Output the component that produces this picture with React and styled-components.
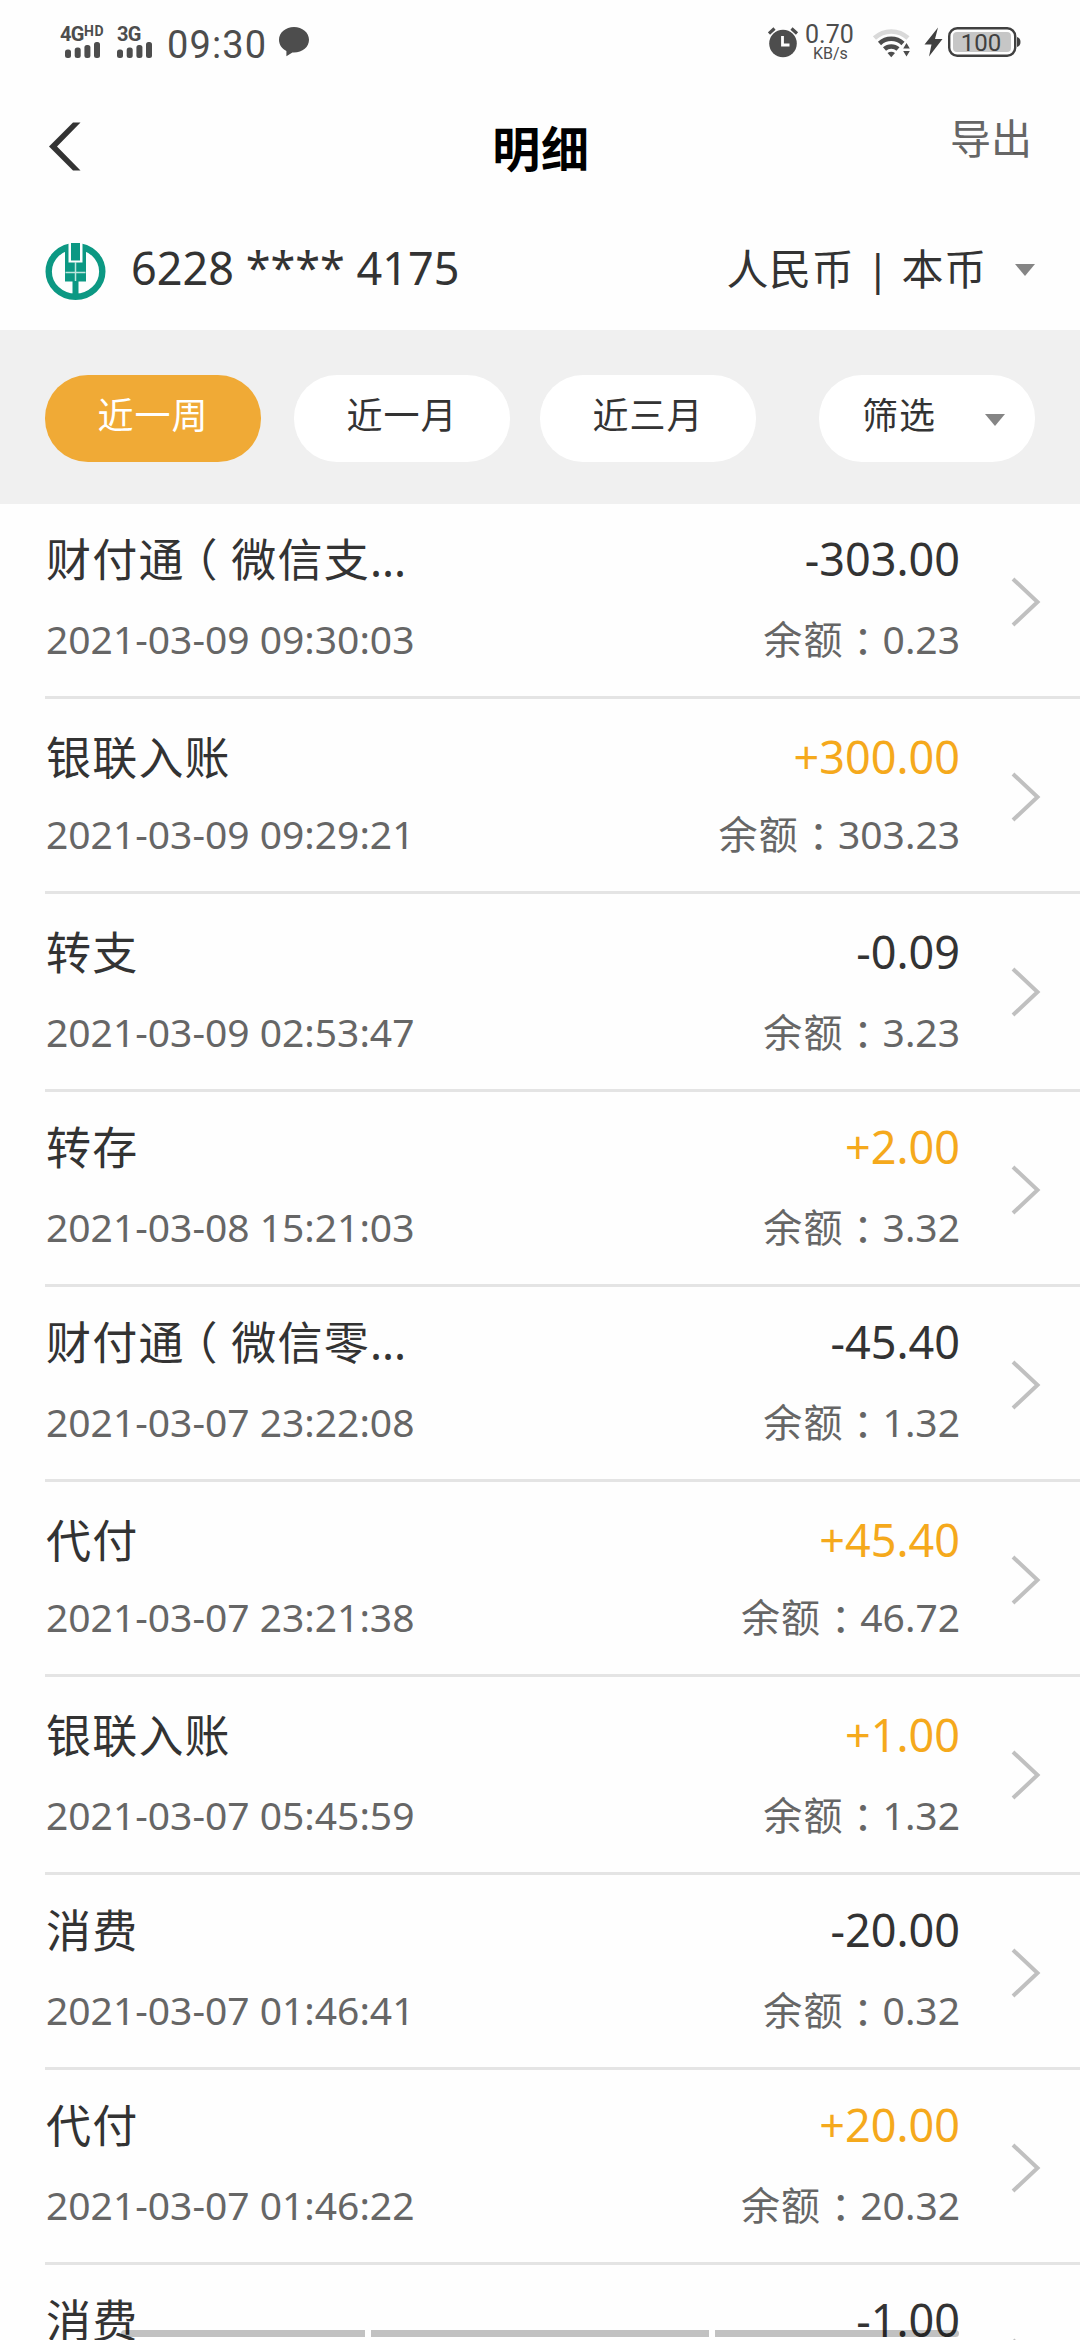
//------------------------------------------------------------------------
import styled, { createGlobalStyle } from "styled-components";
//------------------------------------------------------------------------

const GlobalStyle = createGlobalStyle`
    * {
        box-sizing: border-box;
    }

    body {
        margin: 0;
        background: #fefefe;
        color: #333333;
        font-family: "Noto Sans", "Noto Sans CJK SC", sans-serif;
    }
`;

const Screen = styled.div`
    position: relative;
    width: 1080px;
    height: 2340px;
    overflow: hidden;
`;

//------------------------------------------------------------------------

const StatusBar = styled.div`
    display: flex;
    justify-content: space-between;

    height: 84px;
    padding: 25px 58px 0 60px;

    color: #4d4d4d;
    font-family: Roboto, sans-serif;
`;

const StatusGroup = styled.div`
    display: flex;
    align-items: flex-start;
`;

const Signal = styled.div`
    width: ${(props) => props.$width}px;
    padding-top: 1px;

    svg {
        display: block;
        margin: -1px 0 0 ${(props) => props.$indent}px;
    }
`;

const Network = styled.div`
    display: flex;

    height: 17px;

    font-size: 20px;
    font-weight: 700;
    line-height: 17px;
    letter-spacing: -0.6px;

    small {
        font-size: 14px;
        line-height: 11px;
        letter-spacing: 0.6px;
    }
`;

const Clock = styled.div`
    width: 112px;

    font-size: 38px;
    line-height: 40px;
    letter-spacing: 1.1px;
`;

const Speed = styled.div`
    width: 73px;
    padding-left: 5px;

    font-size: 25px;
    line-height: 20px;

    p {
        margin: 0 0 0 8px;
        font-size: 16px;
        line-height: 18px;
    }
`;

const StatusChat = styled.svg`
    margin-top: 2px;
`;

//------------------------------------------------------------------------

const NavBar = styled.div`
    display: grid;
    grid-template-columns: 1fr auto 1fr;

    height: 159px;
    padding: 0 48px;
`;

const BackIcon = styled.svg`
    margin-top: 38px;
`;

const Title = styled.h1`
    margin: 29px 0 0 2px;

    color: #000000;
    font-size: 48px;
    font-weight: 700;
    line-height: 72px;
    letter-spacing: 0.8px;
`;

const ExportLink = styled.div`
    justify-self: end;

    margin-top: 23px;

    color: #666666;
    font-size: 41px;
    line-height: 63px;
`;

//------------------------------------------------------------------------

const AccountBar = styled.div`
    display: flex;
    align-items: flex-start;

    height: 87px;
    padding: 0 45px;
`;

const CardNumber = styled.div`
    flex: 1;

    margin: -7px 0 0 25px;

    font-size: 45px;
    line-height: 63px;
`;

const Currency = styled.div`
    margin: -6px 28px 0 0;

    font-size: 42px;
    line-height: 63px;
    letter-spacing: 0.7px;
    white-space: pre;
`;

const Caret = styled.div`
    width: 0;
    height: 0;

    margin-top: ${(props) => props.$top}px;

    border-left: 10.5px solid transparent;
    border-right: 10.5px solid transparent;
    border-top: 12px solid #858585;
`;

//------------------------------------------------------------------------

const FilterBar = styled.div`
    display: flex;

    height: 174px;
    padding: 45px;

    background: #f0f0f0;
`;

const Chip = styled.div`
    display: flex;
    justify-content: ${(props) => (props.$menu ? "space-between" : "center")};

    width: 216px;
    height: 87px;
    margin-left: ${(props) => props.$gap || 0}px;
    padding: ${(props) => (props.$menu ? "0 30px 0 43px" : "0")};

    border-radius: 43px;

    background: ${(props) => (props.$active ? "#f0aa36" : "#ffffff")};
    color: ${(props) => (props.$active ? "#ffffff" : "#333333")};

    font-size: 36px;
    line-height: 81px;
    letter-spacing: 1px;
`;

//------------------------------------------------------------------------

const List = styled.div`
    padding-left: 45px;
`;

const Row = styled.div`
    display: flex;

    height: 195px;
    padding-top: 24px;

    border-bottom: 3px solid #e4e4e4;

    &:nth-child(2),
    &:nth-child(6) {
        padding-top: 27px;
    }

    &:nth-child(3),
    &:nth-child(7) {
        height: 198px;
        padding-top: 27px;
    }
`;

const Left = styled.div`
    flex: 1;

    padding-left: 1px;
`;

const Right = styled.div`
    width: 400px;

    text-align: right;
`;

const Name = styled.div`
    height: 66px;

    font-size: 45px;
    line-height: 64px;
    letter-spacing: 1.2px;
`;

const Amount = styled.div`
    height: 66px;

    color: ${(props) => (props.$income ? "#f5a91c" : "#333333")};

    font-size: 45px;
    line-height: 62px;
`;

const Detail = styled.div`
    padding-top: 15px;

    color: #666666;

    font-size: 39px;
    line-height: 60px;

    ${Row}:nth-child(2) &,
    ${Row}:nth-child(6) & {
        padding-top: 12px;
    }
`;

const Label = styled.span`
    letter-spacing: 1.2px;
`;

// The traditional font keeps the full-width colon in the middle of its cell
const Colon = styled.span`
    position: relative;
    top: 2px;

    font-family: "Noto Sans CJK TC", sans-serif;
    line-height: 1;
`;

const Bracket = styled.span`
    margin-left: -0.27em;
    margin-right: 0.28em;
`;

const Ellipsis = styled.span`
    letter-spacing: 0;
`;

const RowArrow = styled.svg`
    margin: 49px 39px 0 50px;

    ${Row}:nth-child(2) &,
    ${Row}:nth-child(3) &,
    ${Row}:nth-child(6) &,
    ${Row}:nth-child(7) & {
        margin-top: 46px;
    }
`;

const GestureBar = styled.div`
    position: absolute;
    left: 121px;
    bottom: 3px;

    display: grid;
    grid-template-columns: 244px 338px 244px;
    gap: 6px;

    span {
        height: 7px;
        background: rgba(0, 0, 0, 0.24);
    }

    span:first-child {
        border-radius: 4px 0 0 4px;
    }

    span:last-child {
        border-radius: 0 4px 4px 0;
    }
`;

//------------------------------------------------------------------------

const records = [
    { name: "财付通（微信支...", time: "2021-03-09 09:30:03", amount: "-303.00", balance: "0.23" },
    { name: "银联入账", time: "2021-03-09 09:29:21", amount: "+300.00", balance: "303.23" },
    { name: "转支", time: "2021-03-09 02:53:47", amount: "-0.09", balance: "3.23" },
    { name: "转存", time: "2021-03-08 15:21:03", amount: "+2.00", balance: "3.32" },
    { name: "财付通（微信零...", time: "2021-03-07 23:22:08", amount: "-45.40", balance: "1.32" },
    { name: "代付", time: "2021-03-07 23:21:38", amount: "+45.40", balance: "46.72" },
    { name: "银联入账", time: "2021-03-07 05:45:59", amount: "+1.00", balance: "1.32" },
    { name: "消费", time: "2021-03-07 01:46:41", amount: "-20.00", balance: "0.32" },
    { name: "代付", time: "2021-03-07 01:46:22", amount: "+20.00", balance: "20.32" },
    { name: "消费", amount: "-1.00" },
];

//------------------------------------------------------------------------

function SignalBars() {
    return (
        <svg width="36" height="17" viewBox="0 0 36 17" fill="#4d4d4d">
            <rect x="0" y="7.5" width="6" height="8.5" rx="2.5" />
            <rect x="9.7" y="5.5" width="6" height="10.5" rx="2.5" />
            <rect x="19.4" y="3" width="6" height="13" rx="2.5" />
            <rect x="29" y="0" width="6" height="16" rx="2.5" />
        </svg>
    );
}

function ChatIcon() {
    return (
        <StatusChat width="30" height="30" viewBox="0 0 30 30">
            <path
                d="M15 0C6.700 0 0 5.600 0 12.800c0 5 3 9 7.400 11.200v5.200l6-3.800c9.700.6 16.600-5 16.600-12.600C30 5.600 23.300 0 15 0z"
                fill="#4d4d4d"
            />
        </StatusChat>
    );
}

function AlarmIcon() {
    return (
        <svg width="32" height="33" viewBox="0 0 32 33">
            <circle cx="15" cy="18.500" r="13.800" fill="#4d4d4d" />
            <path d="M1 8.500L6.500 3.500M29 8.500L23.500 3.500" stroke="#4d4d4d" strokeWidth="3.200" />
            <path d="M14.500 11v9h7" fill="none" stroke="#fefefe" strokeWidth="2.800" />
        </svg>
    );
}

function WifiIcon() {
    return (
        <svg width="51" height="34" viewBox="0 0 51 34" fill="none" strokeWidth="4.500">
            <path d="M1.500 13a24.500 24.500 0 0 1 33.500 0" stroke="#d9d9d9" />
            <path d="M6.500 18.500a17 17 0 0 1 23.500 0" stroke="#4d4d4d" />
            <path d="M11.500 24a10 10 0 0 1 13.500 0" stroke="#4d4d4d" />
            <path d="M14.500 28q3.700-2.500 7.500 0l-3.750 4.200z" fill="#4d4d4d" />
            <path d="M30.200 23.500l3.300-5.500 3.300 5.500zM30.200 26l3.300 5.500 3.300-5.500z" fill="#4d4d4d" />
        </svg>
    );
}

function BatteryIcon() {
    return (
        <svg width="98" height="34" viewBox="0 0 98 34">
            <path d="M14 2.500L.5 19.500h7L5 31.500 18.500 14h-7.500z" fill="#404040" />
            <rect x="25.200" y="3.200" width="66" height="27.600" rx="8" fill="#fefefe" stroke="#404040" strokeWidth="2.400" />
            <rect x="29" y="7" width="58" height="20" rx="4" fill="#c6c6c6" />
            <path d="M93 12q3.500 1 3.500 5t-3.500 5z" fill="#404040" />
            <text x="57" y="26" textAnchor="middle" fontSize="24" fill="#404040">
                100
            </text>
        </svg>
    );
}

function BankLogo() {
    return (
        <svg width="61" height="58" viewBox="0 0 61 58">
            <ellipse cx="30.500" cy="28.500" rx="26.800" ry="25.300" fill="none" stroke="#0c9883" strokeWidth="6.400" />
            <path d="M20 5h21v33.500H33.500V54h-6V38.500H20z" fill="#0c9883" />
            <path d="M23.500 0h14v19.500h-14z" fill="#fefefe" />
            <path d="M26 0h9v17.500h-9z" fill="#0c9883" />
            <path d="M20.500 29.500h20M30.500 19v19" stroke="#bfe5de" strokeWidth="1.500" />
        </svg>
    );
}

function RecordName({ name }) {
    const [before, after] = name.split("（");

    if (after === undefined) {
        return <Name>{name}</Name>;
    }

    return (
        <Name>
            {before}
            <Bracket>（</Bracket>
            {after.replace("...", "")}
            <Ellipsis>...</Ellipsis>
        </Name>
    );
}

function Record({ name, time, amount, balance }) {
    return (
        <Row>
            <Left>
                <RecordName name={name} />
                {time && <Detail>{time}</Detail>}
            </Left>
            <Right>
                <Amount $income={amount.startsWith("+")}>{amount}</Amount>
                {balance && (
                    <Detail>
                        <Label>余额</Label>
                        <Colon>：</Colon>
                        {balance}
                    </Detail>
                )}
            </Right>
            <RowArrow width="31" height="50" viewBox="0 0 31 50">
                <path d="M3 2L27.500 25 3 48" fill="none" stroke="#c0c0c0" strokeWidth="4" />
            </RowArrow>
        </Row>
    );
}

function App() {
    return (
        <Screen>
            <GlobalStyle />
            <StatusBar>
                <StatusGroup>
                    <Signal $width={57} $indent={5}>
                        <Network>
                            4G<small>HD</small>
                        </Network>
                        <SignalBars />
                    </Signal>
                    <Signal $width={50} $indent={0}>
                        <Network>3G</Network>
                        <SignalBars />
                    </Signal>
                    <Clock>09:30</Clock>
                    <ChatIcon />
                </StatusGroup>
                <StatusGroup>
                    <AlarmIcon />
                    <Speed>
                        0.70
                        <p>KB/s</p>
                    </Speed>
                    <WifiIcon />
                    <BatteryIcon />
                </StatusGroup>
            </StatusBar>
            <NavBar>
                <BackIcon width="33" height="49" viewBox="0 0 33 49">
                    <path d="M1 24.500L25 .5h7.500L9 24.500l23.500 24H25z" fill="#333333" />
                </BackIcon>
                <Title>明细</Title>
                <ExportLink>导出</ExportLink>
            </NavBar>
            <AccountBar>
                <BankLogo />
                <CardNumber>6228 **** 4175</CardNumber>
                <Currency>人民币 | 本币</Currency>
                <Caret $top={21} />
            </AccountBar>
            <FilterBar>
                <Chip $active>近一周</Chip>
                <Chip $gap={33}>近一月</Chip>
                <Chip $gap={30}>近三月</Chip>
                <Chip $gap={63} $menu>
                    筛选
                    <Caret $top={39} />
                </Chip>
            </FilterBar>
            <List>
                {records.map((record, index) => (
                    <Record key={index} {...record} />
                ))}
            </List>
            <GestureBar>
                <span />
                <span />
                <span />
            </GestureBar>
        </Screen>
    );
}

export default App;
